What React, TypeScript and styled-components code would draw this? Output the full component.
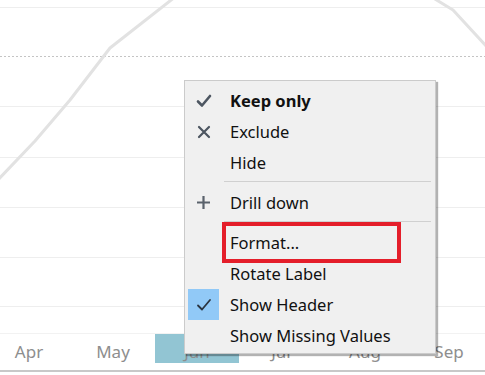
import React from "react";
import styled, { createGlobalStyle } from "styled-components";

const GlobalStyle = createGlobalStyle`
  html, body {
    margin: 0;
    padding: 0;
    background: #ffffff;
    overflow: hidden;
  }
  body {
    font-family: "Noto Sans", "Open Sans", sans-serif;
  }
`;

const Page = styled.div`
  position: relative;
  width: 485px;
  height: 375px;
  overflow: hidden;
  background: #ffffff;
`;

const ChartArea = styled.div`
  height: 333px;
`;

const AxisStrip = styled.div`
  display: flex;
  align-items: flex-start;
  height: 39px;
  margin-left: -13px;
  padding-bottom: 8px;
  border-bottom: 2px solid #c8c8c8;
  border-top: 1px solid #f2f2f2;
  box-sizing: border-box;
`;

const AxisCell = styled.div<{ $active?: boolean }>`
  flex: 0 0 84px;
  height: 29px;
  display: flex;
  align-items: center;
  justify-content: center;
  background: ${(p) => (p.$active ? "#92c5d3" : "transparent")};
  color: #8e8e8e;
  font-size: 17px;
  padding-top: 6px;
  box-sizing: border-box;
`;

const Menu = styled.div`
  position: absolute;
  left: 184px;
  top: 80px;
  width: 252px;
  box-sizing: border-box;
  padding: 4px 0 2px;
  background: #f0f0f0;
  border: 1px solid #cbcbcb;
  box-shadow: 2px 2px 1px rgba(0, 0, 0, 0.3);
`;

const Item = styled.div<{ $bold?: boolean }>`
  display: flex;
  align-items: center;
  height: 31px;
  font-size: 16.5px;
  color: #111111;
  font-weight: ${(p) => (p.$bold ? 700 : 400)};
`;

const IconCell = styled.div<{ $checked?: boolean }>`
  flex: 0 0 31px;
  height: 31px;
  margin-left: 3px;
  margin-right: 11px;
  display: flex;
  align-items: center;
  justify-content: center;
  background: ${(p) => (p.$checked ? "#91c9f7" : "transparent")};
`;

const Separator = styled.div`
  height: 1px;
  background: #d0d0d0;
  margin: 3px 4px 5px 39px;
`;

const Highlight = styled.div`
  position: absolute;
  left: 37px;
  top: 141px;
  width: 179px;
  height: 41px;
  box-sizing: border-box;
  border: 4px solid #e41e2a;
`;

const CheckIcon = ({ color = "#4d5661", width = 2.6 }: { color?: string; width?: number }) => (
  <svg width="16" height="14" viewBox="0 0 16 14">
    <path d="M2 7.5 L6 11.5 L14 2" fill="none" stroke={color} strokeWidth={width} strokeLinecap="round" strokeLinejoin="round" />
  </svg>
);

const CrossIcon = () => (
  <svg width="14" height="14" viewBox="0 0 14 14">
    <path d="M2 2 L12 12 M12 2 L2 12" stroke="#4d5661" strokeWidth="2.2" strokeLinecap="round" />
  </svg>
);

const PlusIcon = () => (
  <svg width="15" height="15" viewBox="0 0 15 15">
    <path d="M7.5 1 V14 M1 7.5 H14" stroke="#5a626c" strokeWidth="2.2" />
  </svg>
);

const gridY = [7, 106, 157, 207, 257, 306];

const Chart = () => (
  <svg width="485" height="333" viewBox="0 0 485 333">
    {gridY.map((y) => (
      <line key={y} x1="0" x2="485" y1={y + 0.5} y2={y + 0.5} stroke="#eeeeee" strokeWidth="1" />
    ))}
    <line x1="0" x2="485" y1="56.5" y2="56.5" stroke="#c4c4c4" strokeWidth="1" strokeDasharray="2 2" />
    <polyline
      points="-4,182 35,141 70,100 110,48 175,-3"
      fill="none"
      stroke="#e2e2e2"
      strokeWidth="3"
      strokeLinejoin="round"
    />
    <polyline points="430,-4 453,10 488,48" fill="none" stroke="#e2e2e2" strokeWidth="3" strokeLinejoin="round" />
    <line x1="70.5" x2="70.5" y1="333" y2="340" stroke="#eeeeee" />
  </svg>
);

const months = ["Apr", "May", "Jun", "Jul", "Aug", "Sep"];

export default function App() {
  return (
    <Page>
      <GlobalStyle />
      <ChartArea>
        <Chart />
      </ChartArea>
      <AxisStrip>
        {months.map((m) => (
          <AxisCell key={m} $active={m === "Jun"}>
            {m}
          </AxisCell>
        ))}
      </AxisStrip>
      <Menu>
        <Item $bold>
          <IconCell>
            <CheckIcon />
          </IconCell>
          Keep only
        </Item>
        <Item>
          <IconCell>
            <CrossIcon />
          </IconCell>
          Exclude
        </Item>
        <Item>
          <IconCell />
          Hide
        </Item>
        <Separator />
        <Item>
          <IconCell>
            <PlusIcon />
          </IconCell>
          Drill down
        </Item>
        <Separator />
        <Item>
          <IconCell />
          Format...
        </Item>
        <Item>
          <IconCell />
          Rotate Label
        </Item>
        <Item>
          <IconCell $checked>
            <CheckIcon color="#2a3440" width={1.8} />
          </IconCell>
          Show Header
        </Item>
        <Item>
          <IconCell />
          Show Missing Values
        </Item>
        <Highlight />
      </Menu>
    </Page>
  );
}
